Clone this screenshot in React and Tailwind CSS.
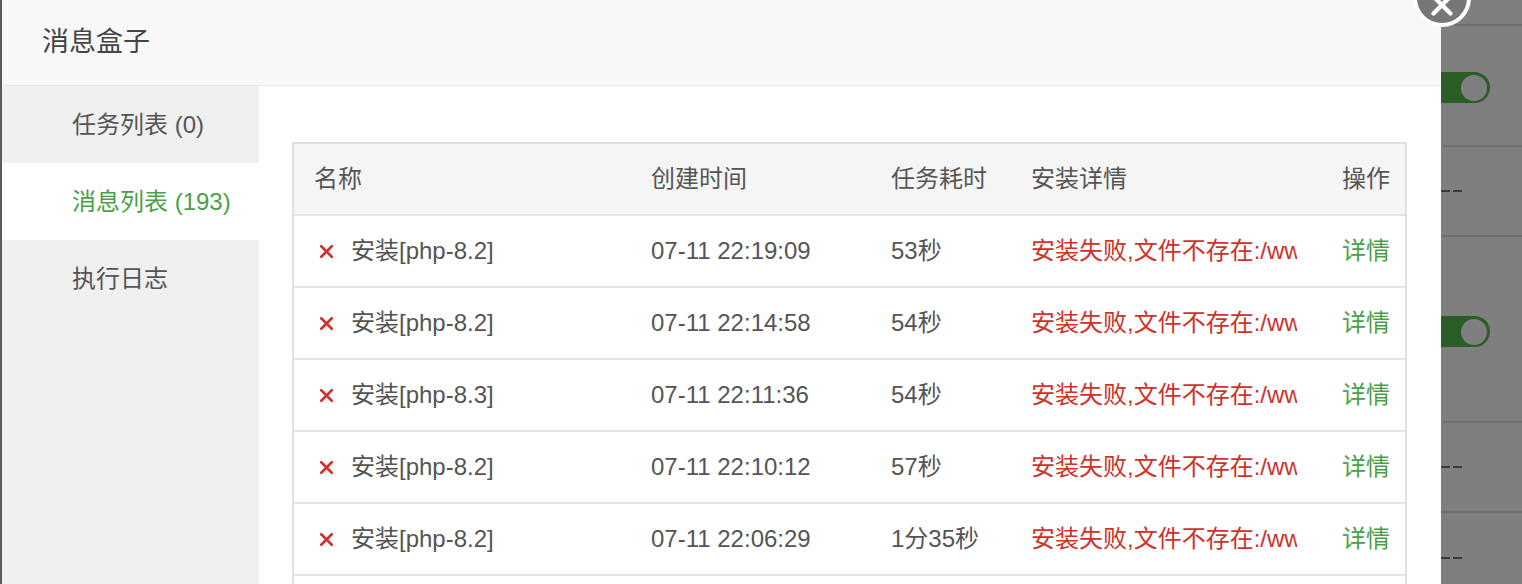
import { X } from 'lucide-react'

const ROWS = [
  { name: '安装[php-8.2]', time: '07-11 22:19:09', cost: '53秒' },
  { name: '安装[php-8.2]', time: '07-11 22:14:58', cost: '54秒' },
  { name: '安装[php-8.3]', time: '07-11 22:11:36', cost: '54秒' },
  { name: '安装[php-8.2]', time: '07-11 22:10:12', cost: '57秒' },
  { name: '安装[php-8.2]', time: '07-11 22:06:29', cost: '1分35秒' },
  { name: '安装[php-8.2]', time: '07-11 22:02:10', cost: '55秒' },
]

const TABS = [
  { label: '任务列表 (0)', active: false },
  { label: '消息列表 (193)', active: true },
  { label: '执行日志', active: false },
]

const COLS = 'grid grid-cols-[337px_240px_140px_308px_1fr]'

function Toggle() {
  return (
    <div className="flex h-[31px] w-[49px] items-center justify-end rounded-r-full bg-[#2b5e27] pr-[3px]">
      <div className="h-[26px] w-[26px] rounded-full bg-[#7f7f7f]" />
    </div>
  )
}

function Dash() {
  return (
    <div className="flex gap-[3px]">
      <div className="h-[2px] w-[9px] bg-[#3a3a3a]" />
      <div className="h-[2px] w-[9px] bg-[#3a3a3a]" />
    </div>
  )
}

export default function App() {
  return (
    <div
      className="relative flex h-[584px] w-[1522px] overflow-hidden bg-[#7f7f7f]"
      style={{ fontFamily: '"Liberation Sans", "Noto Sans CJK SC", sans-serif' }}
    >
      {/* left edge of page behind overlay */}
      <div className="w-[2px] bg-[#5a5a5a]" />

      {/* modal */}
      <div className="flex w-[1439px] flex-col bg-white">
        <div className="flex h-[86px] shrink-0 items-center border-b border-[#e8e8e8] bg-[#f8f8f8] pl-[40px]">
          <span className="text-[27px] text-[#444]">消息盒子</span>
        </div>

        <div className="flex flex-1">
          {/* sidebar */}
          <div className="w-[257px] shrink-0 bg-[#f0f0f0]">
            {TABS.map(t => (
              <div
                key={t.label}
                className={`flex h-[77px] items-center pl-[70px] text-[24px] ${
                  t.active ? 'bg-white text-[#4a9f4a]' : 'text-[#555]'
                }`}
              >
                {t.label}
              </div>
            ))}
          </div>

          {/* content */}
          <div className="flex-1 pl-[33px] pr-[34px] pt-[56px]">
            <div className="border-2 border-b-0 border-[#e0e0e0] text-[24px]">
              <div className={`${COLS} h-[72px] items-center border-b-2 border-[#e4e4e4] bg-[#f5f5f5] text-[#555]`}>
                <div className="pl-[20px]">名称</div>
                <div className="pl-[20px]">创建时间</div>
                <div className="pl-[20px]">任务耗时</div>
                <div className="pl-[20px]">安装详情</div>
                <div className="pr-[15px] text-right">操作</div>
              </div>
              {ROWS.map((r, i) => (
                <div key={i} className={`${COLS} h-[72px] items-center border-b-2 border-[#e4e4e4] text-[#555]`}>
                  <div className="flex items-center pl-[22px]">
                    <X size={21} strokeWidth={3} className="mr-[14px] text-[#d0312b]" />
                    {r.name}
                  </div>
                  <div className="pl-[20px]">{r.time}</div>
                  <div className="pl-[20px]">{r.cost}</div>
                  <div className="min-w-0 pl-[20px] pr-[22px]">
                    <div className="w-[266px] overflow-hidden whitespace-nowrap text-[#d0312b]">安装失败,文件不存在:/www/server/panel/install/php.sh</div>
                  </div>
                  <div className="pr-[15px] text-right text-[#4a9f4a]">详情</div>
                </div>
              ))}
            </div>
          </div>
        </div>
      </div>

      {/* page behind overlay */}
      <div className="flex flex-1 flex-col">
        <div className="h-[26px] shrink-0 border-b-2 border-[#6f6f6f]" />
        <div className="flex h-[121px] shrink-0 items-start border-b-2 border-[#6f6f6f] pt-[46px]">
          <Toggle />
        </div>
        <div className="flex h-[90px] shrink-0 items-center border-b-2 border-[#6f6f6f]">
          <Dash />
        </div>
        <div className="flex h-[186px] shrink-0 items-start border-b-2 border-[#6f6f6f] pt-[79px]">
          <Toggle />
        </div>
        <div className="flex h-[90px] shrink-0 items-center border-b-2 border-[#6f6f6f]">
          <Dash />
        </div>
        <div className="flex h-[90px] shrink-0 items-center">
          <Dash />
        </div>
      </div>

      {/* close button */}
      <div className="absolute left-[1413px] top-[-31px] flex h-[58px] w-[58px] items-center justify-center rounded-full border-[4px] border-white bg-[#777]">
        <X size={34} strokeWidth={3} className="mt-[14px] text-white" />
      </div>
    </div>
  )
}
